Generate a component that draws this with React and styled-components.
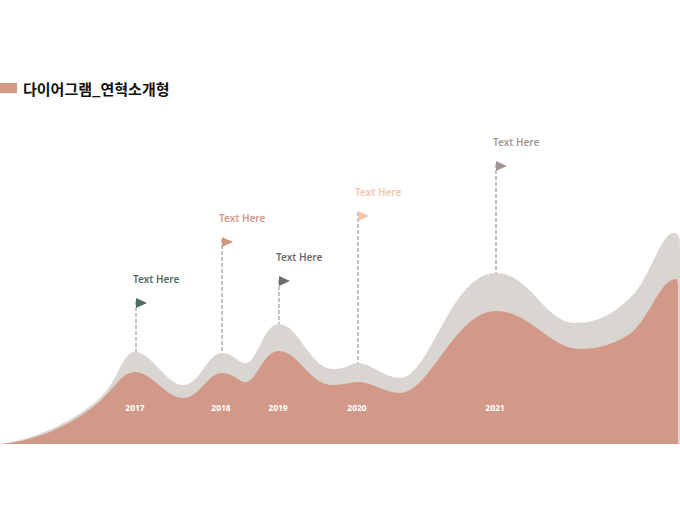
import React from 'react';
import styled, { createGlobalStyle } from 'styled-components';

// page coords: the chart box starts at y = 110
const TOP = 110;

const milestones = [
  { year: '2017', x: 136, peak: 352, flag: 299, label: 279, color: '#4e6b64' },
  { year: '2018', x: 222, peak: 353, flag: 237, label: 218, color: '#d39886' },
  { year: '2019', x: 279, peak: 324, flag: 278, label: 257, color: '#6c6c6c' },
  { year: '2020', x: 358, peak: 363, flag: 210, label: 192, color: '#f3c6ac' },
  { year: '2021', x: 496, peak: 273, flag: 162, label: 142, color: '#a39891' },
];

const grayPath = `M0,444
C30,440 70,425 100,398
C118,382 122,352 135,352
C152,352 166,385 183,385
C200,385 207,353 222,353
C235,353 238,365 247,363
C258,360 264,324 279,324
C298,324 310,368 332,369
C345,370 350,363 358,363
C370,363 385,378 400,378
C430,378 450,273 496,273
C530,273 545,323 575,323
C600,323 615,312 630,298
C650,280 660,233 674,233
C680,233 680,240 680,250
L680,444 Z`;

const pinkPath = `M0,444
C30,442 70,428 100,401
C115,388 122,372 135,372
C152,372 166,398 183,398
C200,398 207,373 222,373
C235,373 240,384 247,382
C258,378 264,351 279,351
C298,351 310,385 332,385
C345,385 350,382 358,382
C372,382 385,393 400,393
C430,393 455,311 496,311
C530,311 550,349 580,349
C600,349 615,343 630,334
C650,318 660,279 676,279
C678,279 678,285 678,290
L678,444 Z`;

export default function App() {
  return (
    <>
      <GlobalStyle />
      <Page>
        <Header>
          <Swatch />
          <Title>다이어그램_연혁소개형</Title>
        </Header>
        <Chart>
          <svg width="680" height="400" viewBox={`0 ${TOP} 680 400`}>
            <path d={grayPath} fill="#d9d5d0" />
            <path d={pinkPath} fill="#d39988" />
            {milestones.map(m => (
              <line
                key={m.year}
                x1={m.x} x2={m.x} y1={m.flag + 2} y2={m.peak}
                stroke="#858585" strokeWidth="1" strokeDasharray="4 2"
              />
            ))}
          </svg>
          {milestones.map(m => (
            <Marker key={m.year} style={{ left: m.x, top: m.label - 7 - TOP }}>
              <Label $color={m.color}>Text Here</Label>
              <svg width="12" height="11" viewBox="0 0 12 11">
                <polygon points="0,0 11,5 0,10" fill={m.color} />
              </svg>
            </Marker>
          ))}
          {milestones.map(m => (
            <Year key={m.year} style={{ left: m.x - 1, top: 402 - TOP }}>{m.year}</Year>
          ))}
        </Chart>
      </Page>
    </>
  );
}

const GlobalStyle = createGlobalStyle`
  body {
    margin: 0;
    background: #fff;
    font-family: "Noto Sans", "Noto Sans CJK KR", sans-serif;
  }
`;

const Page = styled.div`
  width: 680px;
  height: 510px;
  overflow: hidden;
`;

const Header = styled.div`
  display: flex;
  align-items: center;
  gap: 6px;
  height: 20px;
  margin-top: 78px;
  margin-bottom: 12px;
`;

const Swatch = styled.div`
  width: 17px;
  height: 10px;
  background: #d39988;
`;

const Title = styled.h1`
  margin: 0;
  font-family: "Noto Sans CJK KR", "Noto Sans", sans-serif;
  font-size: 15px;
  font-weight: 700;
  color: #111;
`;

const Chart = styled.div`
  position: relative;
  width: 680px;
  height: 400px;
  svg {
    display: block;
  }
`;

const Marker = styled.div`
  position: absolute;
  display: flex;
  flex-direction: column;
  align-items: flex-start;
  gap: 12px;
`;

const Label = styled.span`
  margin-left: -3px;
  font-size: 10px;
  line-height: 14px;
  font-weight: 600;
  color: ${p => p.$color};
  white-space: nowrap;
`;

const Year = styled.span`
  position: absolute;
  transform: translateX(-50%);
  font-size: 8.5px;
  font-weight: 700;
  color: #fff;
`;
